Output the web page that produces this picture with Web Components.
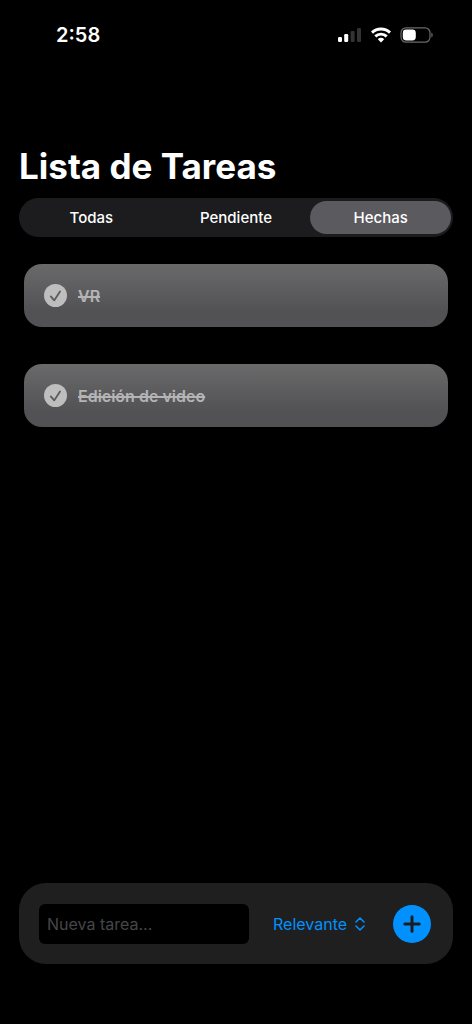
<!DOCTYPE html>
<html lang="es">
<head>
<meta charset="utf-8">
<meta name="viewport" content="width=device-width, initial-scale=1">
<title>Lista de Tareas</title>
<style>
  html { background: #000; color-scheme: dark; }
  body { margin: 0; color: #fff; font-family: Inter, "Liberation Sans", sans-serif; }
</style>
</head>
<body>
<todo-app></todo-app>

<script>
const define = (name, html, setup) => {
  const template = document.createElement('template');
  template.innerHTML = html;
  customElements.define(name, class extends HTMLElement {
    constructor() {
      super();
      this.attachShadow({ mode: 'open' }).append(template.content.cloneNode(true));
    }
    connectedCallback() {
      if (setup) setup(this, this.shadowRoot);
    }
  });
};

define('status-bar', `
  <style>
    :host { display: flex; align-items: center; justify-content: space-between; height: 70px; padding: 0 38px 0 56px; box-sizing: border-box; }
    time { font-size: 20px; line-height: 24px; font-weight: 600; }
    .icons { display: flex; align-items: center; gap: 9px; }
    svg { display: block; }
  </style>
  <time datetime="02:58">2:58</time>
  <div class="icons">
    <svg width="25" height="16" viewBox="0 0 25 16" role="img" aria-label="Señal">
      <rect x="1" y="10" width="4" height="5" rx="1.2" fill="#fff"/>
      <rect x="7.2" y="7" width="4" height="8" rx="1.2" fill="#fff"/>
      <rect x="13.6" y="4" width="4" height="11" rx="1.2" fill="#333"/>
      <rect x="20" y="1" width="4" height="14" rx="1.2" fill="#333"/>
    </svg>
    <svg width="20" height="16" viewBox="0 0 20 16" role="img" aria-label="Wi-Fi">
      <g fill="none" stroke="#fff" stroke-width="2.9">
        <path d="M1 5.6a13 13 0 0 1 18 0"/>
        <path d="M4.3 9.4a8.2 8.2 0 0 1 11.4 0"/>
      </g>
      <path fill="#fff" d="M10 15.4 6.8 12.2a4.5 4.5 0 0 1 6.4 0z"/>
    </svg>
    <svg width="34" height="16" viewBox="0 0 34 16" role="img" aria-label="Batería">
      <rect x="1" y=".8" width="29" height="14.4" rx="5" fill="none" stroke="#6a6a6a" stroke-width="1.2"/>
      <rect x="2.8" y="2.5" width="13" height="11" rx="3.4" fill="#fff"/>
      <path d="M31.4 5.6a2.8 2.8 0 0 1 0 4.8z" fill="#6a6a6a"/>
    </svg>
  </div>
`);

define('segment-option', `
  <style>
    :host { display: flex; flex: 1; }
    button { flex: 1; border: 0; border-radius: 17px; padding: 0; background: none; color: #fff; font: 500 15px/20px Inter, "Liberation Sans", sans-serif; }
    :host([selected]) button { background: #5b5a5f; }
  </style>
  <button type="button"><slot></slot></button>
`, (host, root) => {
  root.querySelector('button').setAttribute('aria-pressed', host.hasAttribute('selected'));
});

define('segment-control', `
  <style>
    :host { display: flex; gap: 4px; height: 39px; padding: 3px 2px; box-sizing: border-box; border-radius: 20px; background: #1c1c1e; }
  </style>
  <slot></slot>
`);

define('task-card', `
  <style>
    :host { display: block; border-radius: 18px; background: linear-gradient(#6a6a6b, #525254 75%); color: #b4b4b5; }
    label { display: flex; align-items: center; gap: 11px; min-height: 63px; padding: 0 20px; }
    .check { display: grid; width: 23px; height: 23px; }
    .check > * { grid-area: 1 / 1; }
    input { appearance: none; margin: 0; border-radius: 50%; background: #bebebe; }
    svg { pointer-events: none; }
    .name { font-size: 16px; line-height: 20px; font-weight: 600; text-decoration: line-through 2px; }
  </style>
  <label>
    <span class="check">
      <input type="checkbox" checked>
      <svg width="23" height="23" viewBox="0 0 23 23" fill="none" stroke="#5c5c5d" stroke-width="1.8" stroke-linecap="round" stroke-linejoin="round" aria-hidden="true">
        <path d="m6.8 12.4 3.4 4 5.8-9"/>
      </svg>
    </span>
    <span class="name"><slot></slot></span>
  </label>
`);

define('task-composer', `
  <style>
    :host { display: block; border-radius: 27px; background: #1f1f1f; }
    form { display: flex; align-items: center; min-height: 81px; box-sizing: border-box; padding: 0 22px 0 20px; margin: 0; }
    input, select { font: 400 16px/24px Inter, "Liberation Sans", sans-serif; }
    input { flex: 1; min-width: 0; height: 40px; box-sizing: border-box; border: 0; border-radius: 6px; padding: 0 8px; background: #000; color: #fff; }
    input::placeholder { color: #464648; opacity: 1; }
    .picker { display: grid; align-items: center; justify-items: end; margin: 0 28px 0 24px; }
    .picker > * { grid-area: 1 / 1; }
    select { appearance: none; border: 0; margin: 0; padding: 0 17px 0 0; background: none; color: #0091ff; }
    .picker svg { pointer-events: none; }
    button { display: grid; place-items: center; width: 38px; height: 38px; padding: 0; border: 0; border-radius: 50%; background: #0091ff; }
  </style>
  <form>
    <input type="text" placeholder="Nueva tarea..." aria-label="Nueva tarea">
    <span class="picker">
      <select aria-label="Prioridad"><option>Relevante</option></select>
      <svg width="10" height="14" viewBox="0 0 10 14" fill="none" stroke="#0091ff" stroke-width="1.6" stroke-linecap="round" stroke-linejoin="round" aria-hidden="true">
        <path d="M1 5 5 1l4 4M1 9l4 4 4-4"/>
      </svg>
    </span>
    <button type="button" aria-label="Añadir">
      <svg width="18" height="18" viewBox="0 0 18 18" stroke="#1c1c1e" stroke-width="3" stroke-linecap="round" aria-hidden="true">
        <path d="M9 1.8v14.4M1.8 9h14.4"/>
      </svg>
    </button>
  </form>
`);

define('todo-app', `
  <style>
    :host { display: flex; flex-direction: column; min-height: 100vh; background: #000; }
    main { flex: 1; display: flex; flex-direction: column; padding: 74px 19px 60px; }
    h1 { margin: 0 0 10px; font-size: 35px; line-height: 44px; font-weight: 700; }
    .tasks { display: flex; flex-direction: column; gap: 37px; margin: 27px 5px 0; }
    task-composer { margin-top: auto; }
  </style>
  <status-bar></status-bar>
  <main>
    <h1>Lista de Tareas</h1>
    <segment-control>
      <segment-option>Todas</segment-option>
      <segment-option>Pendiente</segment-option>
      <segment-option selected>Hechas</segment-option>
    </segment-control>
    <div class="tasks">
      <task-card>VR</task-card>
      <task-card>Edición de video</task-card>
    </div>
    <task-composer></task-composer>
  </main>
`);
</script>
</body>
</html>
